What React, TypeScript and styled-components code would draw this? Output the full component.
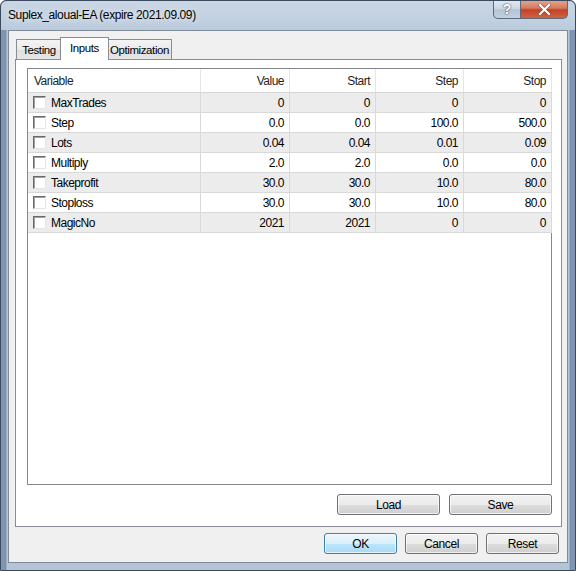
import styled, { createGlobalStyle, css } from 'styled-components';

const GlobalStyle = createGlobalStyle`
  html, body {
    margin: 0;
    padding: 0;
    background: #ffffff;
  }
  #root {
    width: 576px;
    height: 571px;
  }
`;

const Window = styled.div`
  width: 576px;
  height: 571px;
  box-sizing: border-box;
  display: flex;
  flex-direction: column;
  border: 1px solid #3b4a5c;
  border-radius: 6px 6px 0 0;
  background: linear-gradient(
    90deg,
    #8095b0 0px,
    #7c93b0 5px,
    #b4c5d8 6px,
    #b4c5d8 calc(100% - 6px),
    #7c93b0 calc(100% - 5px),
    #8095b0 100%
  );
  font-family: 'Liberation Sans', Arial, sans-serif;
  overflow: hidden;
`;

const TitleBar = styled.div`
  height: 29px;
  display: flex;
  align-items: flex-start;
  justify-content: space-between;
  padding: 0 7px 0 7px;
  background: linear-gradient(180deg, #c9d6e4 0%, #c2d1e1 60%, #bccbdc 100%);
  border-radius: 6px 6px 0 0;
`;

const Title = styled.div`
  margin-top: 7px;
  font-size: 12px;
  color: #000;
  letter-spacing: -0.4px;
  text-shadow: 0 0 6px rgba(255, 255, 255, 0.9);
`;

const CaptionButtons = styled.div`
  display: flex;
  margin-top: -1px;
`;

const CaptionButton = styled.div<{ $close?: boolean }>`
  height: 19px;
  display: flex;
  align-items: center;
  justify-content: center;
  box-sizing: border-box;
  border: 1px solid #5a6b80;
  border-top: none;
  color: #fff;
  ${(p) =>
    p.$close
      ? css`
          width: 47px;
          border-left: none;
          border-radius: 0 0 5px 0;
          background: linear-gradient(180deg, #e8a792 0%, #d67a60 45%, #c24327 55%, #d2623f 100%);
        `
      : css`
          width: 28px;
          border-radius: 0 0 0 5px;
          background: linear-gradient(180deg, #e2e9f1 0%, #cfdae6 45%, #b5c4d5 55%, #c3d0de 100%);
          font-size: 14px;
          font-weight: bold;
          text-shadow: 0 0 2px #42536a, 0 0 1px #42536a;
        `}
`;

const Client = styled.div`
  flex: 1;
  margin: 0 7px 7px 7px;
  border: 1px solid #7f8b99;
  background: #f0f0f0;
  display: flex;
  flex-direction: column;
  padding: 6px 5px 8px 6px;
  font-size: 11px;
  color: #000;
`;

const TabStrip = styled.div`
  display: flex;
  padding-left: 1px;
  height: 22px;
  align-items: flex-end;
  position: relative;
  z-index: 1;
`;

const Tab = styled.div<{ $active?: boolean; $width: number }>`
  box-sizing: border-box;
  width: ${(p) => p.$width}px;
  border: 1px solid #898c95;
  border-bottom: none;
  display: flex;
  align-items: center;
  justify-content: center;
  font-size: 11.5px;
  letter-spacing: -0.4px;
  ${(p) =>
    p.$active
      ? css`
          height: 23px;
          margin: 0 -2px -1px -2px;
          padding-bottom: 3px;
          background: #ffffff;
          position: relative;
          z-index: 2;
        `
      : css`
          height: 20px;
          padding-top: 1px;
          background: linear-gradient(180deg, #f3f3f3 0%, #ebebeb 50%, #dedede 51%, #e6e6e6 100%);
        `}
`;

const TabPanel = styled.div`
  height: 468px;
  box-sizing: border-box;
  border: 1px solid #898c95;
  background: #ffffff;
  display: flex;
  flex-direction: column;
  padding: 8px 9px 11px 11px;
`;

const ListView = styled.div`
  height: 418px;
  box-sizing: border-box;
  border: 1px solid #828790;
  background: #fff;
  display: grid;
  grid-template-columns: 173px 89px 86px 88px 88px;
  grid-template-rows: 24px;
  grid-auto-rows: 20px;
  align-content: start;
`;

const HeaderCell = styled.div<{ $left?: boolean }>`
  box-sizing: border-box;
  display: flex;
  align-items: center;
  justify-content: ${(p) => (p.$left ? 'flex-start' : 'flex-end')};
  padding: ${(p) => (p.$left ? '0 0 0 6px' : '0 5px 0 0')};
  border-right: 1px solid #e5e5e5;
  border-bottom: 1px solid #d5d5d5;
  font-size: 12px;
  letter-spacing: -0.5px;
  color: #1e1e1e;
`;

const Cell = styled.div<{ $odd: boolean; $left?: boolean }>`
  box-sizing: border-box;
  display: flex;
  align-items: center;
  justify-content: ${(p) => (p.$left ? 'flex-start' : 'flex-end')};
  padding: ${(p) => (p.$left ? '0 0 0 5px' : '0 5px 0 0')};
  background: ${(p) => (p.$odd ? '#ececec' : '#ffffff')};
  border-right: 1px solid #d9d9d9;
  border-bottom: 1px solid #d9d9d9;
  font-size: 12px;
  letter-spacing: -0.5px;
  gap: 5px;
`;

const Checkbox = styled.span`
  width: 13px;
  height: 13px;
  box-sizing: border-box;
  border-style: solid;
  border-width: 1px;
  border-color: #6a6a6a #e3e3e3 #e3e3e3 #6a6a6a;
  background: #ffffff;
  box-shadow: inset 1px 1px 0 #a0a0a0;
  flex-shrink: 0;
`;

const ButtonRow = styled.div<{ $padRight: number; $gap: number }>`
  display: flex;
  justify-content: flex-end;
  gap: ${(p) => p.$gap}px;
  padding-right: ${(p) => p.$padRight}px;
`;

const Spacer = styled.div<{ $h: number }>`
  height: ${(p) => p.$h}px;
  flex-shrink: 0;
`;

const Button = styled.div<{ $width: number; $default?: boolean }>`
  width: ${(p) => p.$width}px;
  height: 21px;
  box-sizing: border-box;
  border: 1px solid ${(p) => (p.$default ? '#3c7fb1' : '#707070')};
  border-radius: 3px;
  display: flex;
  align-items: center;
  justify-content: center;
  font-size: 12px;
  letter-spacing: -0.4px;
  color: #000;
  background: ${(p) =>
    p.$default
      ? 'linear-gradient(180deg, #eaf6fd 0%, #d9f0fc 50%, #bee6fd 51%, #a7d9f5 100%)'
      : 'linear-gradient(180deg, #f2f2f2 0%, #ebebeb 50%, #dddddd 51%, #cfcfcf 100%)'};
  box-shadow: inset 0 0 0 1px rgba(255, 255, 255, 0.7);
`;

const columns = ['Variable', 'Value', 'Start', 'Step', 'Stop'];

const rows: string[][] = [
  ['MaxTrades', '0', '0', '0', '0'],
  ['Step', '0.0', '0.0', '100.0', '500.0'],
  ['Lots', '0.04', '0.04', '0.01', '0.09'],
  ['Multiply', '2.0', '2.0', '0.0', '0.0'],
  ['Takeprofit', '30.0', '30.0', '10.0', '80.0'],
  ['Stoploss', '30.0', '30.0', '10.0', '80.0'],
  ['MagicNo', '2021', '2021', '0', '0'],
];

function CloseGlyph() {
  return (
    <svg width="13" height="11" viewBox="0 0 13 11">
      <path
        d="M2 1 L11 10 M11 1 L2 10"
        stroke="#6b2a1c"
        strokeWidth="3.6"
        strokeLinecap="square"
        opacity="0.55"
      />
      <path d="M2 1 L11 10 M11 1 L2 10" stroke="#ffffff" strokeWidth="2.2" strokeLinecap="square" />
    </svg>
  );
}

export default function App() {
  return (
    <>
      <GlobalStyle />
      <Window>
        <TitleBar>
          <Title>Suplex_aloual-EA (expire 2021.09.09)</Title>
          <CaptionButtons>
            <CaptionButton>?</CaptionButton>
            <CaptionButton $close>
              <CloseGlyph />
            </CaptionButton>
          </CaptionButtons>
        </TitleBar>
        <Client>
          <TabStrip>
            <Tab $width={46}>Testing</Tab>
            <Tab $width={49} $active>
              Inputs
            </Tab>
            <Tab $width={65}>Optimization</Tab>
          </TabStrip>
          <TabPanel>
            <ListView>
              {columns.map((c, i) => (
                <HeaderCell key={c} $left={i === 0}>
                  {c}
                </HeaderCell>
              ))}
              {rows.map((r, ri) =>
                r.map((v, ci) => (
                  <Cell key={`${ri}-${ci}`} $odd={ri % 2 === 0} $left={ci === 0}>
                    {ci === 0 && <Checkbox />}
                    {v}
                  </Cell>
                ))
              )}
            </ListView>
            <Spacer $h={9} />
            <ButtonRow $padRight={0} $gap={9}>
              <Button $width={103}>Load</Button>
              <Button $width={103}>Save</Button>
            </ButtonRow>
          </TabPanel>
          <Spacer $h={6} />
          <ButtonRow $padRight={3} $gap={8}>
            <Button $width={73} $default>
              OK
            </Button>
            <Button $width={73}>Cancel</Button>
            <Button $width={73}>Reset</Button>
          </ButtonRow>
        </Client>
      </Window>
    </>
  );
}
